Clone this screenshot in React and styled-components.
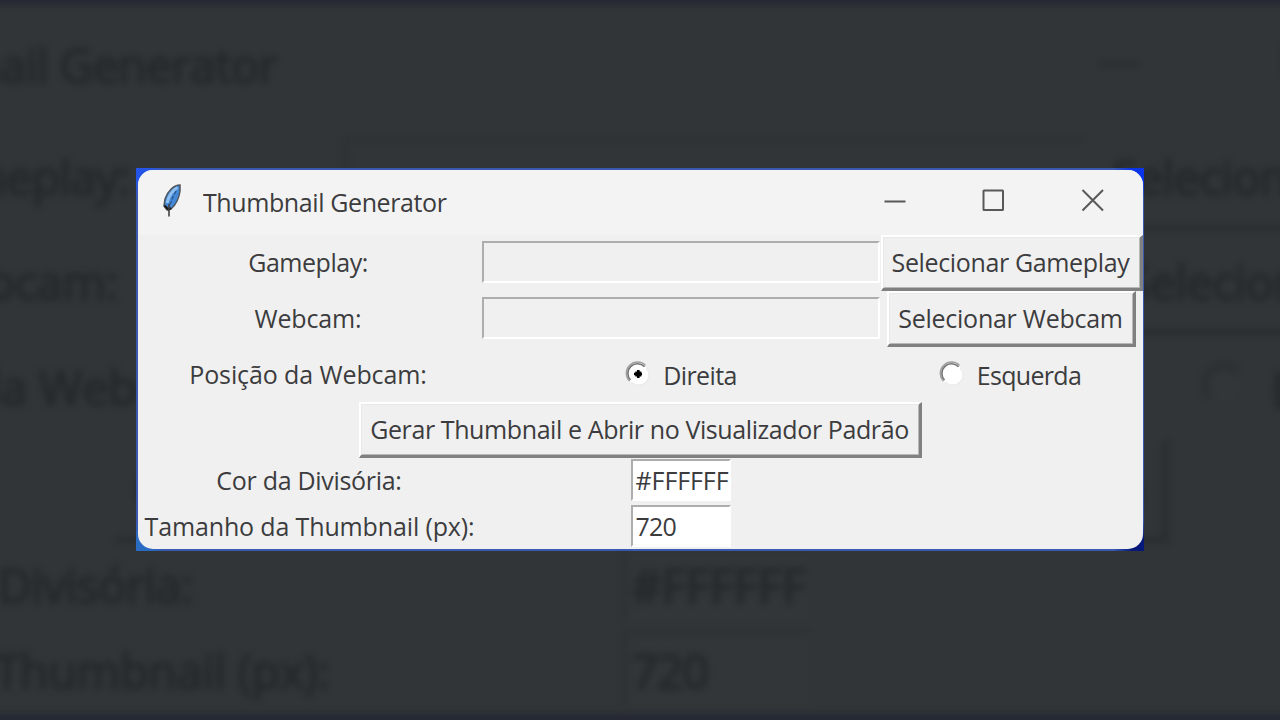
import React from "react";
import styled, { createGlobalStyle } from "styled-components";

const GlobalStyle = createGlobalStyle`
  * { box-sizing: border-box; }
  body { margin: 0; background: #23272a; overflow: hidden; }
`;

const Stage = styled.main`
  position: relative;
  width: 1280px;
  height: 720px;
  overflow: hidden;
  display: grid;
  place-items: center;
  background: #252830;
  font-family: "Open Sans", "Noto Sans", sans-serif;
`;

const Backdrop = styled.div`
  position: absolute;
  inset: 0;
  display: grid;
  place-items: center;
  opacity: 0.066;
  filter: blur(2px);
  transform: translateY(-2px) scale(1.875, 1.868);
  -webkit-text-stroke: 0.9px #303032;
`;

const Shade = styled.div`
  position: absolute;
  inset: 5px 0 7px;
  background: #23272a;
  box-shadow: 0 0 4px #23272a;
`;

const Foreground = styled.div`
  position: relative;
  padding-bottom: 2px;
`;

const Desktop = styled.div`
  width: 1008px;
  height: 383px;
  padding: 2px 1px 2px 2px;
  background:
    radial-gradient(circle at 0 0, #2455e8 12px, transparent 30px),
    radial-gradient(circle at 100% 0, #0a34e8 12px, transparent 30px),
    radial-gradient(circle at 0 100%, #2a6cc4 12px, transparent 30px),
    radial-gradient(circle at 100% 100%, #06187a 12px, transparent 30px),
    #3a58b0;
`;

const Frame = styled.section`
  width: 1005px;
  height: 379px;
  border-radius: 15px;
  overflow: hidden;
  background: #f0f0f0;
  color: #3c3c3e;
`;

const TitleBar = styled.header`
  display: flex;
  align-items: center;
  height: 65px;
  background: #f3f3f3;
`;

const FeatherIcon = styled.svg`
  width: 24px;
  height: 36px;
  margin: -5px 0 0 22px;
`;

const Title = styled.h1`
  flex: 1;
  margin: -1px 0 0 19px;
  font-size: 25px;
  line-height: 34px;
  font-weight: 400;
  letter-spacing: -0.4px;
  white-space: nowrap;
`;

const Controls = styled.div`
  display: flex;
  gap: 75px;
  margin-right: 39px;
  padding-bottom: 4px;
`;

const ControlIcon = styled.svg`
  width: 24px;
  height: 24px;
  fill: none;
  stroke: #585858;
  stroke-width: 2;
`;

const Form = styled.div`
  display: grid;
  grid-template-columns: 343px 399px 263px;
  grid-template-rows: 56px 56px 55px 56px 46px 45px;
  align-items: center;
  justify-items: center;
`;

const Text = styled.span`
  font-size: 25px;
  line-height: 34px;
  letter-spacing: ${(p) => p.$spacing ?? -0.6}px;
  white-space: nowrap;
`;

const Label = styled(Text)`
  margin-right: ${(p) => p.$inset ?? 3}px;
  margin-bottom: ${(p) => (p.$low ? 0 : 2)}px;
`;

const Entry = styled.div`
  display: flex;
  align-items: center;
  width: ${(p) => p.$width};
  height: 42px;
  margin-bottom: 1px;
  padding-left: 3px;
  overflow: hidden;
  background: ${(p) => p.$fill};
  border-style: solid;
  border-width: 2px;
  border-color: #adadad #fff #fff #adadad;
`;

const Button = styled.button`
  display: flex;
  align-items: center;
  justify-content: center;
  width: ${(p) => p.$width}px;
  height: 56px;
  padding: 0 1px 0 0;
  font-family: inherit;
  color: inherit;
  background: #f0f0f0;
  border-style: solid;
  border-width: 2px 3px 3px 2px;
  border-color: #fff #808080 #808080 #fff;
  box-shadow: inset 1px 1px #e8e8e8, inset -1px -1px #b8b8b8;
`;

const WideCell = styled.div`
  grid-column: 1 / -1;
`;

const Option = styled.div`
  display: flex;
  align-items: center;
  gap: 13px;
  margin-top: 1px;
  margin-right: ${(p) => p.$inset ?? 0}px;
`;

const RadioIcon = styled.svg`
  width: 26px;
  height: 26px;
  margin-top: -3px;
`;

function Radio({ checked }) {
  return (
    <RadioIcon viewBox="0 0 26 26">
      <circle cx="14" cy="14" r="10.6" fill="#fff" />
      <path d="M5.500 21A11 11 0 0 1 21.500 5.500" fill="none" stroke="#a0a0a0" strokeWidth="1.500" />
      <path d="M6.500 20A9.600 9.600 0 0 1 20.500 6.800" fill="none" stroke="#747474" strokeWidth="1.600" />
      <path d="M22 8A10 10 0 0 1 8 22.500" fill="none" stroke="#ececec" strokeWidth="1.200" />
      {checked && <path d="M13 10h2.600v1.500h1.700v1.200H18v2.600h-.7v1.200h-1.700V18H13v-1.500h-1.700v-1.200h-1.300v-2.600h1.300v-1.200H13z" fill="#000" />}
    </RadioIcon>
  );
}

function Feather() {
  return (
    <FeatherIcon viewBox="0 0 24 36">
      <path d="M20 3C14 3 7.500 9 5 17L4 24l3 4 4-1c4.500-4 8-10 9-18z" fill="#4488d8" stroke="#50565c" strokeWidth="1.500" />
      <path d="M17.500 5.500C13 8 9 13 7 21" fill="none" stroke="#8fc0f0" strokeWidth="3" />
      <path d="M16 9l-2 4-1 1.500-1.500 5-2.500 4" fill="none" stroke="#2c588c" strokeWidth="1.300" strokeDasharray="4 1.500" />
      <path d="M4.500 23.500l4 4 2.500-1.500" fill="none" stroke="#1c1c1c" strokeWidth="2.200" />
      <path d="M9 22v12.500" stroke="#404040" strokeWidth="1.600" />
    </FeatherIcon>
  );
}

function GeneratorWindow() {
  return (
    <Desktop>
      <Frame>
        <TitleBar>
          <Feather />
          <Title>Thumbnail Generator</Title>
          <Controls>
            <ControlIcon viewBox="0 0 24 24"><path d="M2.500 13.500h21" /></ControlIcon>
            <ControlIcon viewBox="0 0 24 24"><rect x="2.500" y="2.500" width="19.500" height="19.500" rx="0.500" /></ControlIcon>
            <ControlIcon viewBox="0 0 24 24"><path d="M2.500 2l20.500 20.500M23 2L2.500 22.500" /></ControlIcon>
          </Controls>
        </TitleBar>
        <Form>
          <Label $spacing={-0.47}>Gameplay:</Label>
          <Entry $width="398px" $fill="#f0f0f0" />
          <Button $width={262}><Text $spacing={-0.36}>Selecionar Gameplay</Text></Button>

          <Label $spacing={-0.15}>Webcam:</Label>
          <Entry $width="398px" $fill="#f0f0f0" />
          <Button $width={249}><Text $spacing={-0.25}>Selecionar Webcam</Text></Button>

          <Label $spacing={-0.1} $low>Posição da Webcam:</Label>
          <Option><Radio checked /><Text>Direita</Text></Option>
          <Option $inset={4}><Radio /><Text $spacing={-0.7}>Esquerda</Text></Option>

          <WideCell>
            <Button $width={563}>
              <Text $spacing={-0.4}>Gerar Thumbnail e Abrir no Visualizador Padrão</Text>
            </Button>
          </WideCell>

          <Label $spacing={-0.3} $inset={1}>Cor da Divisória:</Label>
          <Entry $width="100px" $fill="#fff"><Text $spacing={-0.08}>#FFFFFF</Text></Entry>
          <span />

          <Label $spacing={-0.14} $inset={0} $low>Tamanho da Thumbnail (px):</Label>
          <Entry $width="100px" $fill="#fff"><Text $spacing={-0.8}>720</Text></Entry>
        </Form>
      </Frame>
    </Desktop>
  );
}

export default function App() {
  return (
    <>
      <GlobalStyle />
      <Stage>
        <Shade />
        <Backdrop aria-hidden="true"><GeneratorWindow /></Backdrop>
        <Foreground><GeneratorWindow /></Foreground>
      </Stage>
    </>
  );
}
